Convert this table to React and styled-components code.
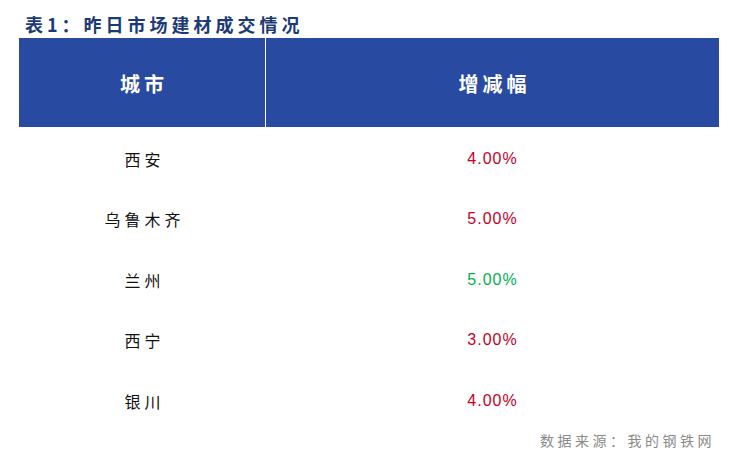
import React from 'react';
import styled, { createGlobalStyle } from 'styled-components';

const GlobalStyle = createGlobalStyle`
  html, body {
    margin: 0;
    padding: 0;
    background: #ffffff;
  }
  body {
    font-family: "Liberation Serif", "Noto Sans CJK SC", serif;
  }
`;

const rows = [
  { city: '西安', change: '4.00%', up: true },
  { city: '乌鲁木齐', change: '5.00%', up: true },
  { city: '兰州', change: '5.00%', up: false },
  { city: '西宁', change: '3.00%', up: true },
  { city: '银川', change: '4.00%', up: true },
];

export default function App() {
  return (
    <>
      <GlobalStyle />
      <Page>
        <Title>表1：昨日市场建材成交情况</Title>
        <Table>
          <HeadCell>城市</HeadCell>
          <HeadCell>增减幅</HeadCell>
          {rows.map((r) => (
            <React.Fragment key={r.city}>
              <CityCell>{r.city}</CityCell>
              <ValueCell $up={r.up}>{r.change}</ValueCell>
            </React.Fragment>
          ))}
        </Table>
        <Source>数据来源：我的钢铁网</Source>
      </Page>
    </>
  );
}

const Page = styled.div`
  width: 730px;
  height: 467px;
  box-sizing: border-box;
  padding: 12px 11px 0 19px;
  display: flex;
  flex-direction: column;
`;

const Title = styled.div`
  font-family: "Noto Sans CJK SC", sans-serif;
  font-weight: 700;
  font-size: 18px;
  line-height: 24px;
  letter-spacing: 4px;
  color: #1c3a78;
  padding-left: 6px;
  margin-bottom: 2px;
`;

const Table = styled.div`
  display: grid;
  grid-template-columns: 247px 453px;
  grid-template-rows: 89px repeat(5, 60.5px);
  width: 700px;
`;

const HeadCell = styled.div`
  background: #284ba1;
  color: #ffffff;
  font-family: "Noto Sans CJK SC", sans-serif;
  font-weight: 700;
  font-size: 20px;
  letter-spacing: 4px;
  display: flex;
  align-items: center;
  justify-content: center;
  padding: 2px 0 0 4px;
  &:first-child {
    border-right: 1px solid #ffffff;
  }
`;

const CityCell = styled.div`
  font-family: "Noto Sans CJK SC", sans-serif;
  font-size: 16px;
  letter-spacing: 4px;
  padding: 3px 0 0 4px;
  color: #111111;
  display: flex;
  align-items: center;
  justify-content: center;
`;

const ValueCell = styled.div`
  font-family: "Liberation Sans", Arial, sans-serif;
  font-size: 16px;
  letter-spacing: 1px;
  padding-top: 3px;
  color: ${(p) => (p.$up ? '#c8001e' : '#00b050')};
  display: flex;
  align-items: center;
  justify-content: center;
`;

const Source = styled.div`
  align-self: flex-end;
  margin-top: 0;
  font-family: "Noto Sans CJK SC", sans-serif;
  font-size: 14px;
  line-height: 20px;
  letter-spacing: 3.5px;
  color: #8a8a8a;
  margin-right: 4px;
`;
